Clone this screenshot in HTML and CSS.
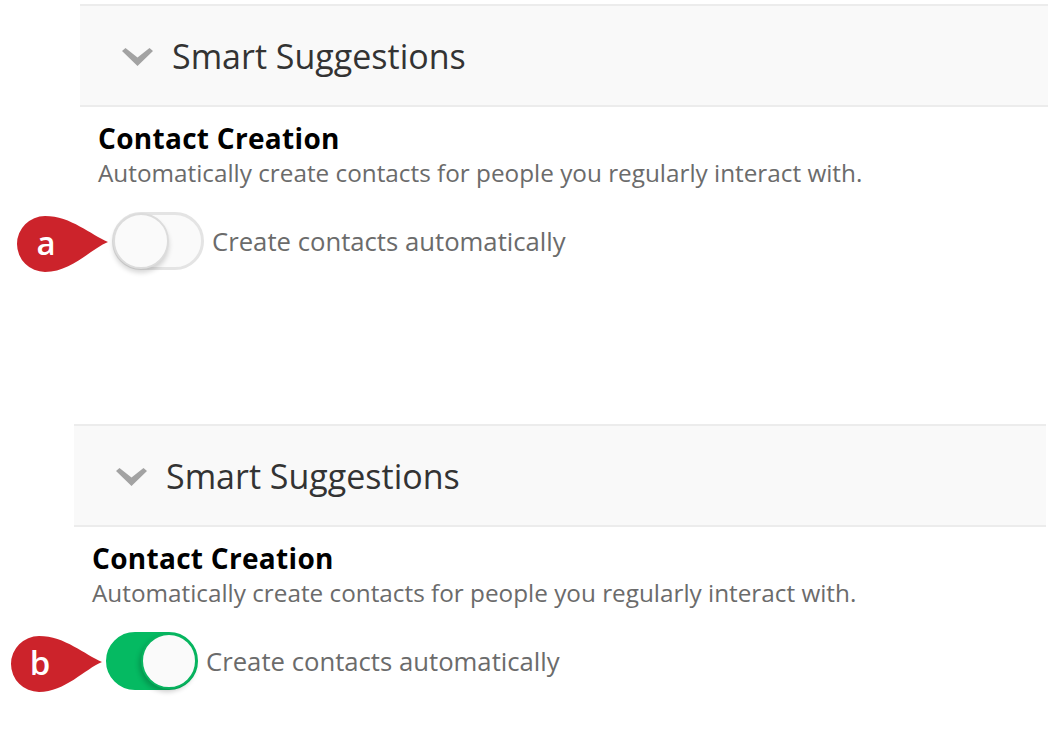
FILE: index.html
```html
<!DOCTYPE html>
<html>
<head>
<meta charset="utf-8">
<link rel="stylesheet" href="styles.css">
</head>
<body>
<div class="page">
  <section class="panel panel-a">
    <div class="panel-header">
      <svg class="chevron" viewBox="0 0 31 18" width="31" height="18"><path d="M0 3 L3.5 0 L15.5 9.5 L27.5 0 L31 3 L15.5 18 Z" fill="#a3a3a3"/></svg>
      <span class="panel-title">Smart Suggestions</span>
    </div>
    <div class="panel-body">
      <h2 class="setting-title">Contact Creation</h2>
      <p class="setting-desc">Automatically create contacts for people you regularly interact with.</p>
      <div class="toggle-row">
        <div class="switch">
          <div class="badge">
            <svg viewBox="0 0 93 56" width="93" height="56"><path d="M93 26 C 76 19, 56 0, 30 0 A 28 28 0 1 0 30 56 C 56 56, 76 33, 93 26 Z" fill="#cc232b"/></svg>
            <span class="badge-letter">a</span>
          </div>
          <div class="knob"></div>
        </div>
        <span class="toggle-label">Create contacts automatically</span>
      </div>
    </div>
  </section>

  <section class="panel panel-b">
    <div class="panel-header">
      <svg class="chevron" viewBox="0 0 31 18" width="31" height="18"><path d="M0 3 L3.5 0 L15.5 9.5 L27.5 0 L31 3 L15.5 18 Z" fill="#a3a3a3"/></svg>
      <span class="panel-title">Smart Suggestions</span>
    </div>
    <div class="panel-body">
      <h2 class="setting-title">Contact Creation</h2>
      <p class="setting-desc">Automatically create contacts for people you regularly interact with.</p>
      <div class="toggle-row">
        <div class="switch on">
          <div class="badge">
            <svg viewBox="0 0 93 56" width="93" height="56"><path d="M93 26 C 76 19, 56 0, 30 0 A 28 28 0 1 0 30 56 C 56 56, 76 33, 93 26 Z" fill="#cc232b"/></svg>
            <span class="badge-letter">b</span>
          </div>
          <div class="knob"></div>
        </div>
        <span class="toggle-label">Create contacts automatically</span>
      </div>
    </div>
  </section>
</div>
</body>
</html>
```

FILE: styles.css
```css
html, body {
  margin: 0;
  padding: 0;
  background: #ffffff;
}
body {
  font-family: "Open Sans", "Liberation Sans", sans-serif;
  width: 1050px;
  height: 740px;
  overflow: hidden;
}
.page {
  display: flex;
  flex-direction: column;
}
.panel {
  display: flex;
  flex-direction: column;
}
.panel-a {
  margin: 4px 2px 0 80px;
}
.panel-b {
  margin: 154px 4px 0 74px;
}
.panel-header {
  display: flex;
  align-items: center;
  height: 99px;
  background: #f9f9f9;
  border-top: 2px solid #ececec;
  border-bottom: 2px solid #ececec;
  padding-left: 42px;
}
.chevron {
  display: block;
  margin-right: 19px;
  margin-top: 2px;
}
.panel-title {
  font-size: 34px;
  color: #333333;
  line-height: 44px;
}
.panel-body {
  padding-left: 18px;
}
.setting-title {
  margin: 14px 0 0 0;
  font-size: 28px;
  line-height: 34px;
  font-weight: 700;
  color: #000000;
  letter-spacing: 0.3px;
}
.setting-desc {
  margin: 2px 0 0 0;
  font-size: 24.3px;
  line-height: 32px;
  color: #6b6b6b;
}
.toggle-row {
  display: flex;
  align-items: center;
  gap: 8px;
  margin-top: 23px;
  padding-left: 14px;
}
.switch {
  position: relative;
  box-sizing: border-box;
  width: 92px;
  height: 58px;
  border-radius: 29px;
  background: #fafafa;
  border: 3px solid #e4e4e4;
  flex: none;
}
.knob {
  position: absolute;
  top: -2px;
  left: -2px;
  box-sizing: border-box;
  width: 56px;
  height: 56px;
  border-radius: 50%;
  background: #fafafa;
  border: 2px solid #dcdcdc;
  box-shadow: 0 4px 5px rgba(0, 0, 0, 0.16);
}
.switch.on {
  background: #05ba62;
  border-color: #05ba62;
}
.switch.on .knob {
  left: auto;
  right: -2px;
  border-color: #08b45f;
  box-shadow: -2px 3px 5px rgba(0, 0, 0, 0.2);
}
.badge {
  position: absolute;
  right: calc(100% + 7px);
  top: 50%;
  transform: translateY(-50%);
  width: 93px;
  height: 56px;
  margin-top: 3px;
}
.badge svg {
  display: block;
}
.badge-letter {
  position: absolute;
  left: 0;
  top: 0;
  width: 62px;
  height: 56px;
  display: flex;
  align-items: center;
  justify-content: center;
  color: #ffffff;
  font-family: "Open Sans", "Liberation Sans", sans-serif;
  font-size: 33px;
  font-weight: 600;
  line-height: 1;
  padding-bottom: 4px;
  box-sizing: border-box;
}
.toggle-label {
  font-size: 25.7px;
  color: #6b6b6b;
}
```
